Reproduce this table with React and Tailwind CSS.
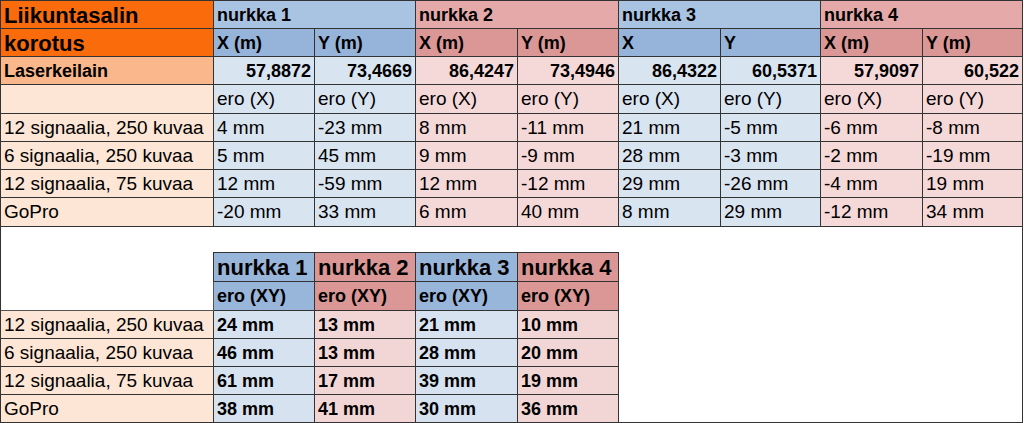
import React from 'react';

// Palette sampled from the spreadsheet screenshot
const C = {
  orange: 'bg-[#fa6b0b]',
  laser: 'bg-[#f9b78b]',
  peach: 'bg-[#fde6d6]',
  blueHead: 'bg-[#a9c3e3]',
  blueSub: 'bg-[#96b4d9]',
  blueCell: 'bg-[#d9e4f1]',
  redHead: 'bg-[#e4a9a8]',
  redSub: 'bg-[#db9796]',
  redCell: 'bg-[#f5d9d9]',
};

const CORNERS = [
  { name: 'nurkka 1', tone: 'blue', x: 'X (m)', y: 'Y (m)', lx: '57,8872', ly: '73,4669' },
  { name: 'nurkka 2', tone: 'red', x: 'X (m)', y: 'Y (m)', lx: '86,4247', ly: '73,4946' },
  { name: 'nurkka 3', tone: 'blue', x: 'X', y: 'Y', lx: '86,4322', ly: '60,5371' },
  { name: 'nurkka 4', tone: 'red', x: 'X (m)', y: 'Y (m)', lx: '57,9097', ly: '60,522' },
];

const ROWS = [
  { label: '12 signaalia, 250 kuvaa', vals: ['4 mm', '-23 mm', '8 mm', '-11 mm', '21 mm', '-5 mm', '-6 mm', '-8 mm'], xy: ['24 mm', '13 mm', '21 mm', '10 mm'] },
  { label: '6 signaalia, 250 kuvaa', vals: ['5 mm', '45 mm', '9 mm', '-9 mm', '28 mm', '-3 mm', '-2 mm', '-19 mm'], xy: ['46 mm', '13 mm', '28 mm', '20 mm'] },
  { label: '12 signaalia, 75 kuvaa', vals: ['12 mm', '-59 mm', '12 mm', '-12 mm', '29 mm', '-26 mm', '-4 mm', '19 mm'], xy: ['61 mm', '17 mm', '39 mm', '19 mm'] },
  { label: 'GoPro', vals: ['-20 mm', '33 mm', '6 mm', '40 mm', '8 mm', '29 mm', '-12 mm', '34 mm'], xy: ['38 mm', '41 mm', '30 mm', '36 mm'] },
];

const ROW_H = ['h-[28px]', 'h-[28px]', 'h-[28px]', 'h-[29px]', 'h-[28px]', 'h-[28px]', 'h-[28px]', 'h-[29px]'];

const tone = (t, kind) => {
  if (t === 'blue') return kind === 'head' ? C.blueHead : kind === 'sub' ? C.blueSub : C.blueCell;
  return kind === 'head' ? C.redHead : kind === 'sub' ? C.redSub : C.redCell;
};

// one grid cell; last column drops its right border (the frame draws it)
const Cell = ({ children, className = '', last = false, right = false }) => (
  <div
    className={`flex items-center border-b border-[#333] px-[3px] pt-[1px] whitespace-nowrap overflow-hidden ${last ? '' : 'border-r'} ${right ? 'justify-end' : ''} ${className}`}
  >
    {children}
  </div>
);

const App = () => {
  return (
    <div
      className="w-[1023px] h-[423px] bg-white border-l border-r border-b border-[#333] text-black"
      style={{ fontFamily: '"Liberation Sans", Arial, sans-serif' }}
    >
      {/* upper table */}
      <div className="grid grid-cols-[213px_101px_101px_102px_101px_102px_100px_102px_99px] border-t border-[#333]">
        {/* row 1 */}
        <Cell className={`${ROW_H[0]} ${C.orange} text-[22px] font-bold`}>Liikuntasalin</Cell>
        {CORNERS.map((c, i) => (
          <Cell key={c.name} last={i === 3} className={`${ROW_H[0]} col-span-2 ${tone(c.tone, 'head')} text-[18px] font-bold`}>
            {c.name}
          </Cell>
        ))}

        {/* row 2 */}
        <Cell className={`${ROW_H[1]} ${C.orange} text-[22px] font-bold`}>korotus</Cell>
        {CORNERS.map((c, i) => (
          <React.Fragment key={c.name}>
            <Cell className={`${ROW_H[1]} ${tone(c.tone, 'sub')} text-[18px] font-bold`}>{c.x}</Cell>
            <Cell last={i === 3} className={`${ROW_H[1]} ${tone(c.tone, 'sub')} text-[18px] font-bold`}>{c.y}</Cell>
          </React.Fragment>
        ))}

        {/* row 3: laser reference */}
        <Cell className={`${ROW_H[2]} ${C.laser} text-[18px] font-bold`}>Laserkeilain</Cell>
        {CORNERS.map((c, i) => (
          <React.Fragment key={c.name}>
            <Cell right className={`${ROW_H[2]} ${tone(c.tone, 'cell')} text-[18px] font-bold`}>{c.lx}</Cell>
            <Cell right last={i === 3} className={`${ROW_H[2]} ${tone(c.tone, 'cell')} text-[18px] font-bold`}>{c.ly}</Cell>
          </React.Fragment>
        ))}

        {/* row 4: sub labels */}
        <Cell className={`${ROW_H[3]} ${C.peach}`} />
        {CORNERS.map((c, i) => (
          <React.Fragment key={c.name}>
            <Cell className={`${ROW_H[3]} ${tone(c.tone, 'cell')} text-[19px]`}>ero (X)</Cell>
            <Cell last={i === 3} className={`${ROW_H[3]} ${tone(c.tone, 'cell')} text-[19px]`}>ero (Y)</Cell>
          </React.Fragment>
        ))}

        {/* data rows */}
        {ROWS.map((r, ri) => (
          <React.Fragment key={r.label}>
            <Cell className={`${ROW_H[4 + ri]} ${C.peach} text-[19px]`}>{r.label}</Cell>
            {r.vals.map((v, vi) => (
              <Cell
                key={vi}
                last={vi === 7}
                className={`${ROW_H[4 + ri]} ${tone(CORNERS[Math.floor(vi / 2)].tone, 'cell')} text-[19px]`}
              >
                {v}
              </Cell>
            ))}
          </React.Fragment>
        ))}
      </div>

      {/* blank band */}
      <div className="h-[25px]" />

      {/* lower summary table */}
      <div className="grid grid-cols-[213px_101px_101px_102px_101px_1fr]">
        <div className="h-[30px] border-r border-[#333]" />
        {CORNERS.map((c) => (
          <div
            key={c.name}
            className={`h-[30px] flex items-center px-[3px] pt-[1px] border-t border-r border-b border-[#333] ${c.tone === 'blue' ? 'bg-[#98b5da]' : 'bg-[#da9795]'} text-[22px] font-bold whitespace-nowrap`}
          >
            {c.name}
          </div>
        ))}
        <div />

        <div className="h-[29px] border-r border-b border-[#555]" />
        {CORNERS.map((c) => (
          <div
            key={c.name}
            className={`h-[29px] flex items-center px-[3px] pt-[1px] border-r border-b border-[#333] ${c.tone === 'blue' ? 'bg-[#98b5da]' : 'bg-[#da9795]'} text-[18px] font-bold`}
          >
            ero (XY)
          </div>
        ))}
        <div />

        {ROWS.map((r, ri) => {
          const h = ri === 3 ? 'h-[27px]' : 'h-[28px]';
          const bb = ri === 3 ? '' : 'border-b';
          return (
            <React.Fragment key={r.label}>
              <div className={`${h} flex items-center px-[3px] pt-[1px] ${C.peach} border-r ${bb} border-[#333] text-[19px] whitespace-nowrap`}>
                {r.label}
              </div>
              {r.xy.map((v, vi) => (
                <div
                  key={vi}
                  className={`${h} flex items-center px-[3px] pt-[1px] border-r ${bb} border-[#333] ${CORNERS[vi].tone === 'blue' ? 'bg-[#d6e2f0]' : 'bg-[#f2d6d6]'} text-[18px] font-bold`}
                >
                  {v}
                </div>
              ))}
              <div />
            </React.Fragment>
          );
        })}
      </div>
    </div>
  );
};

export default App;
